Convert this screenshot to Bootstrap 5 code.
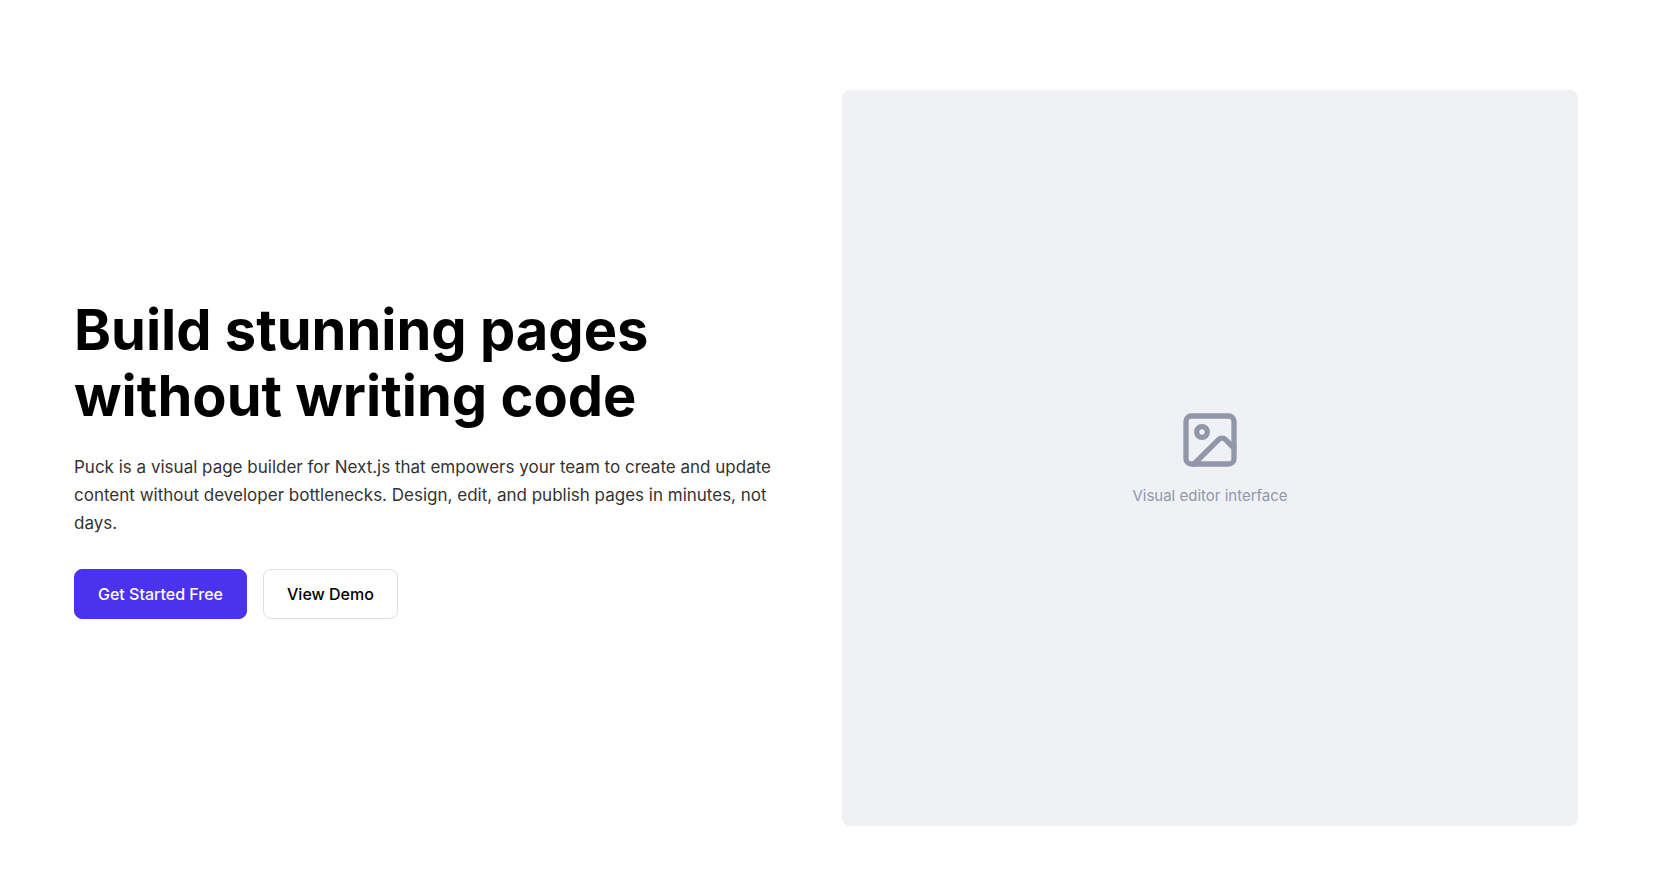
<!DOCTYPE html>
<html lang="en">
<head>
<meta charset="utf-8">
<meta name="viewport" content="width=device-width, initial-scale=1">
<title>Build stunning pages without writing code</title>
<link href="https://cdn.jsdelivr.net/npm/bootstrap@5.3.0/dist/css/bootstrap.min.css" rel="stylesheet">
<style>
  body { font-family: Inter, "Liberation Sans", sans-serif; color: #000; background: #fff; }
  .hero { padding: 90px 78px 46px 74px; }
  .hero .row { --bs-gutter-x: 32px; }
  .hero-title { font-size: 56px; line-height: 66px; font-weight: 700; }
  .hero-text { font-size: 17px; line-height: 28px; color: #333; }
  .hero .btn { --bs-btn-padding-x: 23px; --bs-btn-padding-y: 12px; --bs-btn-border-radius: 8px; line-height: 24px; font-weight: 500; }
  .btn-start { --bs-btn-color: #fff; --bs-btn-bg: #4b32ee; --bs-btn-border-color: #4b32ee; --bs-btn-hover-color: #fff; --bs-btn-hover-bg: #3c25d4; }
  .btn-demo { --bs-btn-color: #000; --bs-btn-bg: #fff; --bs-btn-border-color: #dfdfdf; --bs-btn-hover-bg: #f5f5f5; --bs-btn-hover-border-color: #dfdfdf; }
  .preview { background: #f0f1f5; color: #9197a9; border-radius: 8px; gap: 12px; }
  .preview-label { font-size: 15px; line-height: 24px; }
</style>
</head>
<body>
<main class="hero container-fluid">
  <div class="row align-items-center">
    <div class="col-md-6">
      <h1 class="hero-title mb-4">Build stunning pages without writing code</h1>
      <p class="hero-text mb-0 pb-2">Puck is a visual page builder for Next.js that empowers your team to create and update content without developer bottlenecks. Design, edit, and publish pages in minutes, not days.</p>
      <div class="d-flex flex-wrap gap-3 pt-4">
        <button type="button" class="btn btn-start">Get Started Free</button>
        <button type="button" class="btn btn-demo">View Demo</button>
      </div>
    </div>
    <div class="col-md-6">
      <div class="ratio ratio-1x1">
        <div class="preview d-flex flex-column align-items-center justify-content-center">
          <svg width="64" height="64" viewBox="0 0 24 24" fill="none" stroke="currentColor" stroke-width="2" stroke-linecap="round" stroke-linejoin="round" aria-hidden="true">
            <rect x="3" y="3" width="18" height="18" rx="2"/>
            <circle cx="9" cy="9" r="2"/>
            <path d="m21 15-3.086-3.086a2 2 0 0 0-2.828 0L6 21"/>
          </svg>
          <span class="preview-label">Visual editor interface</span>
        </div>
      </div>
    </div>
  </div>
</main>
<script src="https://cdn.jsdelivr.net/npm/bootstrap@5.3.0/dist/js/bootstrap.bundle.min.js"></script>
</body>
</html>
